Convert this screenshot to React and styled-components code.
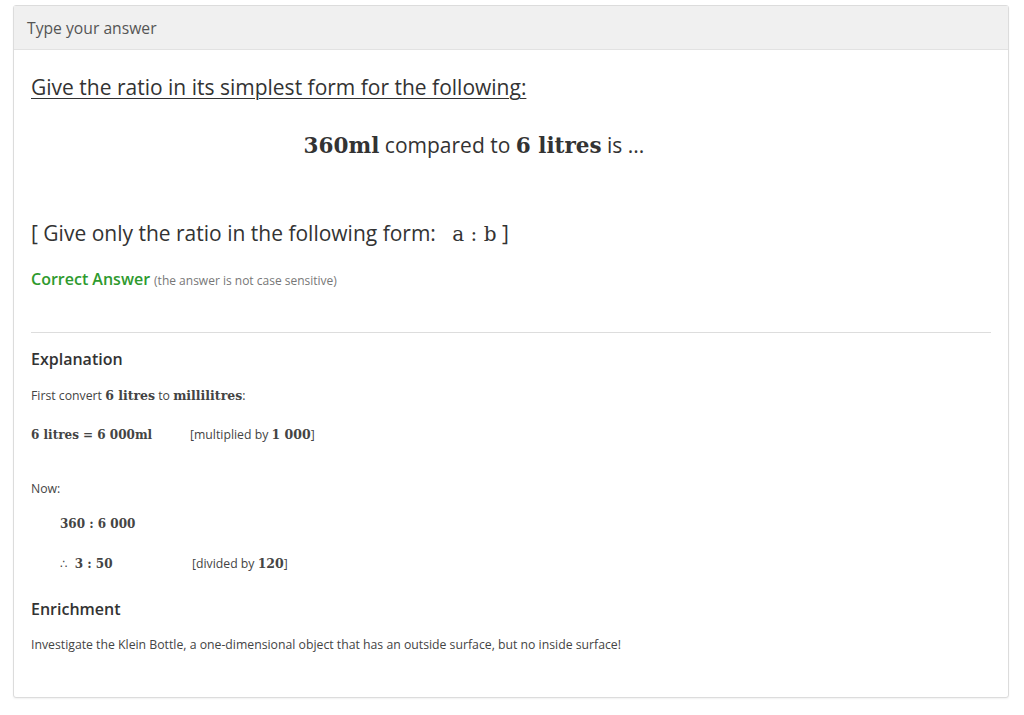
import React from "react";
import styled, { createGlobalStyle } from "styled-components";

const Global = createGlobalStyle`
  html, body { margin: 0; padding: 0; background: #fff; }
  body { font-family: "Open Sans", "Noto Sans", sans-serif; color: #333; }
`;

const Page = styled.div`
  padding: 5px 13px 18px 13px;
`;

const Panel = styled.div`
  border: 1px solid #dcdcdc;
  border-radius: 3px;
  box-shadow: 0 1px 2px rgba(0,0,0,0.06);
  background: #fff;
  width: 996px;
  box-sizing: border-box;
`;

const Header = styled.div`
  background: #f0f0f0;
  border-bottom: 1px solid #e2e2e2;
  height: 43px;
  display: flex;
  align-items: center;
  padding: 0 13px;
  font-size: 15.7px;
  color: #555;
`;

const Body = styled.div`
  padding: 20px 17px 42px 17px;
`;

const Title = styled.div`
  font-size: 21px;
  text-decoration: underline;
  text-underline-offset: 3px;
  text-decoration-thickness: 1px;
  line-height: 34px;
  color: #333;
`;

const Statement = styled.div`
  text-align: center;
  padding-right: 74px;
  font-size: 21px;
  line-height: 34px;
  margin-top: 24px;
`;

const M = styled.span`
  font-family: "DejaVu Serif", "Liberation Serif", serif;
  font-weight: ${(p) => (p.$bold ? 700 : 400)};
  font-size: ${(p) => p.$size || 20}px;
`;

const Instruction = styled.div`
  font-size: 21px;
  line-height: 34px;
  margin-top: 53px;
`;

const AnswerRow = styled.div`
  margin-top: 17px;
  display: flex;
  align-items: baseline;
  gap: 4px;
`;

const Correct = styled.span`
  color: #2e9a2e;
  font-weight: 600;
  font-size: 16px;
`;

const Note = styled.span`
  color: #777;
  font-size: 12px;
`;

const Rule = styled.hr`
  border: none;
  border-top: 1px solid #ddd;
  margin: 42px 0 14px 0;
`;

const Heading = styled.div`
  font-size: 16px;
  font-weight: 600;
  color: #333;
  line-height: 24px;
  margin-top: ${(p) => p.$mt || 0}px;
`;

const Para = styled.div`
  font-size: 12.25px;
  color: #444;
  line-height: 20px;
  margin-top: ${(p) => p.$mt || 0}px;
  padding-left: ${(p) => p.$indent || 0}px;
  display: flex;
  align-items: baseline;
`;

const Cell = styled.span`
  display: inline-block;
  width: ${(p) => p.$w}px;
`;

const Therefore = styled.span`
  font-family: "DejaVu Sans", sans-serif;
  font-size: 12px;
  margin-right: 7px;
`;

export default function App() {
  return (
    <Page>
      <Global />
      <Panel>
        <Header>Type your answer</Header>
        <Body>
          <Title>Give the ratio in its simplest form for the following:</Title>
          <Statement>
            <M $bold $size={21.5}>360ml</M> compared to <M $bold $size={21.5}>6 litres</M> is ...
          </Statement>
          <Instruction>
            [ Give only the ratio in the following form:&nbsp;&nbsp; <M $size={20}>a : b</M> ]
          </Instruction>
          <AnswerRow>
            <Correct>Correct Answer</Correct>
            <Note>(the answer is not case sensitive)</Note>
          </AnswerRow>
          <Rule />
          <Heading>Explanation</Heading>
          <Para $mt={15}>
            <span>
              First convert <M $bold $size={12.5}>6 litres</M> to <M $bold $size={12.5}>millilitres</M>:
            </span>
          </Para>
          <Para $mt={19}>
            <Cell $w={159}>
              <M $bold $size={12}>6 litres = 6 000ml</M>
            </Cell>
            <span>
              [multiplied by <M $bold $size={12.5}>1 000</M>]
            </span>
          </Para>
          <Para $mt={34}>Now:</Para>
          <Para $mt={15} $indent={29}>
            <M $bold $size={12}>360 : 6 000</M>
          </Para>
          <Para $mt={20} $indent={29}>
            <Cell $w={132}>
              <Therefore>∴</Therefore>
              <M $bold $size={12}>3 : 50</M>
            </Cell>
            <span>
              [divided by <M $bold $size={12.5}>120</M>]
            </span>
          </Para>
          <Heading $mt={23}>Enrichment</Heading>
          <Para $mt={14}>
            Investigate the Klein Bottle, a one-dimensional object that has an outside surface, but no inside surface!
          </Para>
        </Body>
      </Panel>
    </Page>
  );
}
